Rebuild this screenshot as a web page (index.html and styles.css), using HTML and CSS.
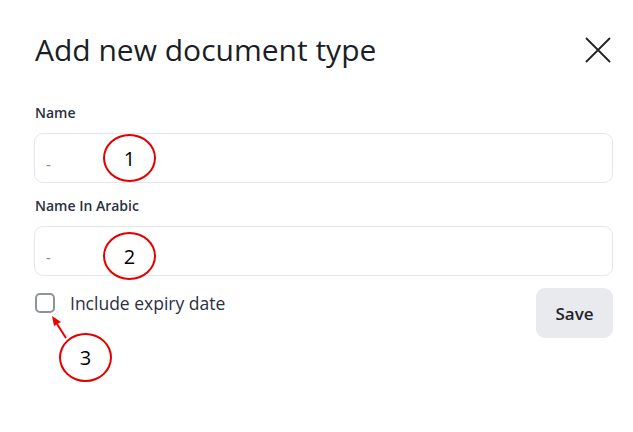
FILE: index.html
```html
<!DOCTYPE html>
<html>
<head>
<meta charset="utf-8">
<link rel="stylesheet" href="styles.css">
</head>
<body>
<div class="dialog">
  <header class="head">
    <h1 class="title">Add new document type</h1>
    <button class="close" aria-label="Close">
      <svg width="26" height="26" viewBox="0 0 26 26"><path d="M1 1 L25 25 M25 1 L1 25" stroke="#222" stroke-width="1.8" fill="none"/></svg>
    </button>
  </header>
  <div class="field first">
    <label class="label">Name</label>
    <div class="input"><span class="ph">-</span></div>
  </div>
  <div class="field">
    <label class="label">Name In Arabic</label>
    <div class="input"><span class="ph">-</span></div>
  </div>
  <div class="footer">
    <label class="check"><span class="box"></span><span>Include expiry date</span></label>
    <button class="save">Save</button>
  </div>

  <div class="mark m1">1</div>
  <div class="mark m2">2</div>
  <div class="mark m3">3</div>
  <svg class="arrow" width="633" height="432" viewBox="0 0 633 432">
    <line x1="66" y1="338" x2="57" y2="324" stroke="#e00" stroke-width="2"/>
    <polygon points="52,316 61,322 54,326" fill="#e00"/>
  </svg>
</div>
</body>
</html>
```
FILE: styles.css
```css
* { box-sizing: border-box; }
html, body { margin: 0; padding: 0; background: #fff; }
body { font-family: "Open Sans", "Noto Sans", sans-serif; color: #1f2328; }

.dialog {
  position: relative;
  width: 633px;
  height: 432px;
  padding: 32px 20px 0 34px;
}

.head {
  display: flex;
  justify-content: space-between;
  align-items: center;
}
.title {
  margin: 0 0 0 1px;
  font-size: 30px;
  line-height: 36px;
  font-weight: 400;
  color: #1a1f27;
}
.close {
  border: 0;
  background: none;
  padding: 0;
  margin-right: 2px;
  width: 26px;
  height: 26px;
  display: flex;
}

.field { display: flex; flex-direction: column; margin-top: 14px; }
.field.first { margin-top: 36px; }
.label {
  font-size: 14px;
  line-height: 18px;
  font-weight: 600;
  color: #2a3140;
  margin-bottom: 11px;
  padding-left: 1px;
}
.input {
  height: 50px;
  border: 1.5px solid #e4e7eb;
  border-radius: 9px;
  display: flex;
  align-items: center;
  padding-left: 11px;
}
.ph { color: #7c8593; font-size: 15px; line-height: 18px; margin-top: 12px; }

.footer {
  margin-top: 12px;
  display: flex;
  justify-content: space-between;
  align-items: flex-start;
}
.check {
  display: flex;
  align-items: center;
  gap: 15px;
  margin-top: 5px;
  margin-left: 1px;
  font-size: 17.5px;
  line-height: 20px;
  color: #2a3140;
}
.box {
  width: 20px;
  height: 20px;
  border: 2.5px solid #8e939b;
  border-radius: 5px;
}
.save {
  width: 77px;
  height: 50px;
  border: 0;
  border-radius: 9px;
  background: #e8eaee;
  font-family: "Open Sans", sans-serif;
  font-size: 17px;
  font-weight: 600;
  color: #1f2328;
  padding: 0;
}

.mark {
  position: absolute;
  width: 53px;
  height: 48px;
  border: 2px solid #e50000;
  border-radius: 50%;
  display: flex;
  align-items: center;
  justify-content: center;
  font-family: "Open Sans", sans-serif;
  font-size: 20px;
  color: #000;
}
.m1 { left: 103px; top: 134px; }
.m2 { left: 103px; top: 232px; }
.m3 { left: 59px; top: 333px; width: 53px; height: 49px; }
.arrow { position: absolute; left: 0; top: 0; pointer-events: none; }
```
